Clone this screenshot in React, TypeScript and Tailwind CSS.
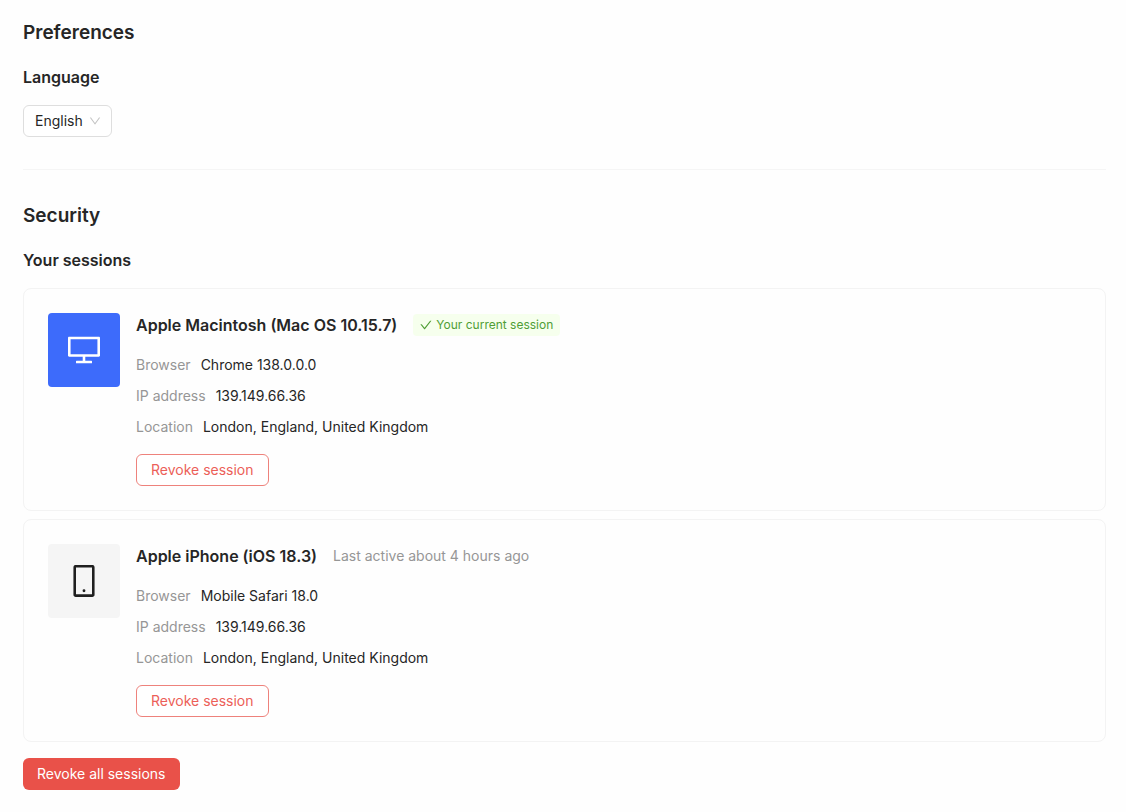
import { useState } from "react";
import type { ReactNode } from "react";
import {
  AiOutlineCheck,
  AiOutlineDesktop,
  AiOutlineDown,
  AiOutlineMobile,
} from "react-icons/ai";

const ICON_BOX = "64 64 896 896";

interface Session {
  id: string;
  device: string;
  kind: "desktop" | "mobile";
  current: boolean;
  lastActive?: string;
  browser: string;
  ip: string;
  location: string;
}

const sessions: Session[] = [
  {
    id: "mac",
    device: "Apple Macintosh (Mac OS 10.15.7)",
    kind: "desktop",
    current: true,
    browser: "Chrome 138.0.0.0",
    ip: "139.149.66.36",
    location: "London, England, United Kingdom",
  },
  {
    id: "iphone",
    device: "Apple iPhone (iOS 18.3)",
    kind: "mobile",
    current: false,
    lastActive: "Last active about 4 hours ago",
    browser: "Mobile Safari 18.0",
    ip: "139.149.66.36",
    location: "London, England, United Kingdom",
  },
];

function Detail({ label, children }: { label: string; children: ReactNode }) {
  return (
    <div className="flex gap-2.5">
      <dt className="text-[#969696]">{label}</dt>
      <dd>{children}</dd>
    </div>
  );
}

function SessionCard({ session }: { session: Session }) {
  const Icon = session.kind === "desktop" ? AiOutlineDesktop : AiOutlineMobile;
  return (
    <li className="flex items-start gap-4 rounded-lg border border-[#f3f3f3] p-6">
      <div
        className={`flex h-[74px] w-[72px] shrink-0 items-center justify-center rounded ${
          session.current ? "bg-[#3d6bfb] text-white" : "bg-[#f5f5f5] text-[#1f1f1f]"
        }`}
      >
        <Icon viewBox={ICON_BOX} className="size-8" aria-hidden="true" />
      </div>
      <div className="min-w-0">
        <div className="mb-[17px] flex flex-wrap items-center gap-4">
          <h4 className="text-base leading-6 font-semibold">{session.device}</h4>
          {session.current ? (
            <span className="flex items-center gap-1 rounded bg-[#f6ffed] px-[7px] text-xs leading-[22px] text-[#4f9e35]">
              <AiOutlineCheck viewBox={ICON_BOX} className="size-3" aria-hidden="true" />
              Your current session
            </span>
          ) : (
            <span className="text-[#969696]">{session.lastActive}</span>
          )}
        </div>
        <dl className="mb-4 flex flex-col gap-[9px]">
          <Detail label="Browser">{session.browser}</Detail>
          <Detail label="IP address">{session.ip}</Detail>
          <Detail label="Location">{session.location}</Detail>
        </dl>
        <button
          type="button"
          className="h-8 rounded-md border border-[#ee827c] bg-white px-3.5 text-[#ec5f59]"
        >
          Revoke session
        </button>
      </div>
    </li>
  );
}

export default function App() {
  const [language, setLanguage] = useState("en");
  return (
    <main className="min-h-screen bg-[#fefefe] pt-[19px] pr-5 pb-[22px] pl-[23px] font-['Inter',sans-serif] text-sm leading-[22px] text-[#262626]">
      <section className="border-b border-[#f5f5f5] pb-8">
        <h2 className="mb-[18px] text-[19px] leading-7 font-semibold">Preferences</h2>
        <label htmlFor="language" className="mb-4 block text-base leading-6 font-semibold">
          Language
        </label>
        <div className="grid w-fit items-center">
          <select
            id="language"
            value={language}
            onChange={(e) => setLanguage(e.target.value)}
            className="col-start-1 row-start-1 h-8 appearance-none rounded-md border border-[#dedede] bg-white pr-7 pl-[11px]"
          >
            <option value="en">English</option>
          </select>
          <AiOutlineDown
            viewBox={ICON_BOX}
            className="pointer-events-none col-start-1 row-start-1 mr-[11px] size-3 justify-self-end text-[#c4c4c4]"
            aria-hidden="true"
          />
        </div>
      </section>
      <section className="pt-8">
        <h2 className="mb-[18px] text-[19px] leading-7 font-semibold">Security</h2>
        <h3 className="mb-4 text-base leading-6 font-semibold">Your sessions</h3>
        <ul className="mb-4 flex flex-col gap-2">
          {sessions.map((session) => (
            <SessionCard key={session.id} session={session} />
          ))}
        </ul>
        <button type="button" className="h-8 rounded-md bg-[#e95149] px-3.5 text-white">
          Revoke all sessions
        </button>
      </section>
    </main>
  );
}
